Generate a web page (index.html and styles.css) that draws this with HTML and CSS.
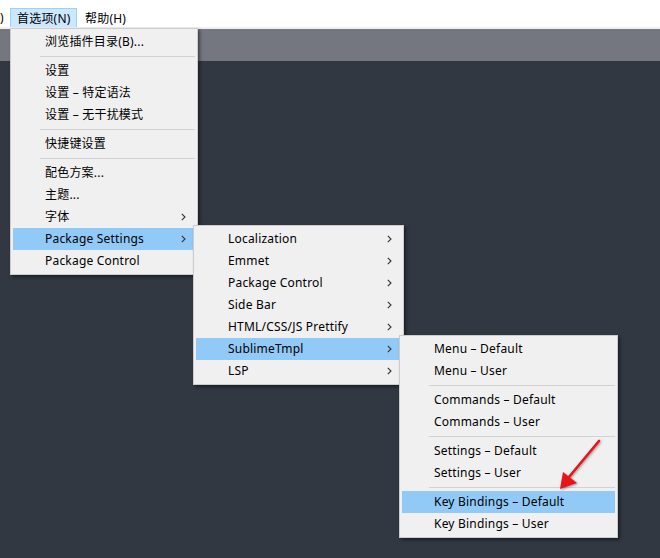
FILE: index.html
```html
<!DOCTYPE html>
<html lang="zh-CN">

<head>
    <meta charset="UTF-8">
    <title>首选项</title>
    <link rel="stylesheet" href="styles.css">
</head>

<body>
    <div class="menubar">
        <span class="bar-item cut">)</span>
        <span class="bar-item open">首选项(N)</span>
        <span class="bar-item">帮助(H)</span>
    </div>
    <div class="tabbar"></div>
    <div class="editor"></div>

    <!-- 首选项 -->
    <div class="menu menu-prefs">
        <div class="item">浏览插件目录(B)...</div>
        <div class="sep"></div>
        <div class="item">设置</div>
        <div class="item">设置 – 特定语法</div>
        <div class="item">设置 – 无干扰模式</div>
        <div class="sep"></div>
        <div class="item">快捷键设置</div>
        <div class="sep"></div>
        <div class="item">配色方案...</div>
        <div class="item">主题...</div>
        <div class="item sub">字体 <svg class="chev" viewBox="0 0 5 8"><polyline points="0.8,0.8 4,4 0.8,7.2" /></svg></div>
        <div class="item sub active">Package Settings <svg class="chev" viewBox="0 0 5 8"><polyline points="0.8,0.8 4,4 0.8,7.2" /></svg></div>
        <div class="item">Package Control</div>
    </div>

    <!-- Package Settings -->
    <div class="menu menu-packages">
        <div class="item sub">Localization <svg class="chev" viewBox="0 0 5 8"><polyline points="0.8,0.8 4,4 0.8,7.2" /></svg></div>
        <div class="item sub">Emmet <svg class="chev" viewBox="0 0 5 8"><polyline points="0.8,0.8 4,4 0.8,7.2" /></svg></div>
        <div class="item sub">Package Control <svg class="chev" viewBox="0 0 5 8"><polyline points="0.8,0.8 4,4 0.8,7.2" /></svg></div>
        <div class="item sub">Side Bar <svg class="chev" viewBox="0 0 5 8"><polyline points="0.8,0.8 4,4 0.8,7.2" /></svg></div>
        <div class="item sub">HTML/CSS/JS Prettify <svg class="chev" viewBox="0 0 5 8"><polyline points="0.8,0.8 4,4 0.8,7.2" /></svg></div>
        <div class="item sub active">SublimeTmpl <svg class="chev" viewBox="0 0 5 8"><polyline points="0.8,0.8 4,4 0.8,7.2" /></svg></div>
        <div class="item sub">LSP <svg class="chev" viewBox="0 0 5 8"><polyline points="0.8,0.8 4,4 0.8,7.2" /></svg></div>
    </div>

    <!-- SublimeTmpl -->
    <div class="menu menu-tmpl">
        <div class="item">Menu – Default</div>
        <div class="item">Menu – User</div>
        <div class="sep"></div>
        <div class="item">Commands – Default</div>
        <div class="item">Commands – User</div>
        <div class="sep"></div>
        <div class="item">Settings – Default</div>
        <div class="item">Settings – User</div>
        <div class="sep"></div>
        <div class="item active">Key Bindings – Default</div>
        <div class="item">Key Bindings – User</div>
    </div>

    <svg class="pointer" width="660" height="558" viewBox="0 0 660 558">
        <line x1="599" y1="441" x2="569" y2="477" />
        <polygon points="560,489 563,472 577,483" />
    </svg>
</body>

</html>
```

FILE: styles.css
```css
body {
    margin: 0;
    width: 660px;
    height: 558px;
    overflow: hidden;
    background: #313842;
    font-family: "Noto Sans", "Noto Sans CJK SC", sans-serif;
    font-size: 12px;
    letter-spacing: 0.2px;
    color: #000;
}

.menubar {
    display: flex;
    align-items: flex-end;
    height: 27px;
    background: #fff;
    border-bottom: 2px solid #f0f0f0;
}

.bar-item {
    display: flex;
    align-items: center;
    height: 19px;
    padding: 0 7px 1px;
    border: 1px solid transparent;
    border-bottom: 0;
    box-sizing: border-box;
    white-space: nowrap;
}

.bar-item.cut {
    width: 10px;
    padding: 0 0 1px;
    border: 0;
}

.bar-item.open {
    background: #cce8ff;
    border-color: #99d1ff;
    width: 67px;
    padding: 0 0 1px 6px;
}

.tabbar {
    height: 32px;
    background: #74777f;
}

.menu {
    position: absolute;
    background: #f0f0f0;
    border: 1px solid #cccccc;
    padding: 2px;
    box-shadow: 2px 2px 3px rgba(0, 0, 0, 0.45);
}

.menu-prefs {
    left: 10px;
    top: 28px;
    width: 182px;
}

.menu-packages {
    left: 193px;
    top: 225px;
    width: 205px;
}

.menu-tmpl {
    left: 399px;
    top: 335px;
    width: 213px;
}

.item {
    display: flex;
    align-items: center;
    justify-content: space-between;
    box-sizing: border-box;
    height: 22px;
    padding: 0 9px 2px 32px;
    white-space: nowrap;
}

.item.active {
    background: #91c9f7;
}

.chev {
    width: 5px;
    height: 8px;
    margin-top: 2px;
    fill: none;
    stroke: #333;
    stroke-width: 1.1;
}

.sep {
    height: 7px;
    margin-left: 27px;
    display: flex;
    align-items: center;
}

.sep::after {
    content: "";
    flex: 1;
    height: 1px;
    background: #d2d2d2;
}

.pointer {
    position: absolute;
    left: 0;
    top: 0;
    pointer-events: none;
    filter: drop-shadow(1px 1px 1px rgba(0, 0, 0, 0.35));
}

.pointer line {
    stroke: #e8141a;
    stroke-width: 2.6;
    stroke-linecap: round;
}

.pointer polygon {
    fill: #e8141a;
}
```
